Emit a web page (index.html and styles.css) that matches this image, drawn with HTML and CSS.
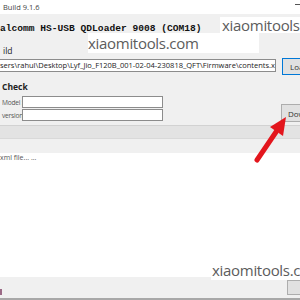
FILE: index.html
```html
<html>
	<head>
		<link rel="stylesheet" href="styles.css">
	</head>
	<body>
		<div class="window">
			<div class="titlebar">
				<span class="title">Build 9.1.6</span>
				<span class="min"></span>
			</div>
			<div class="port">alcomm HS-USB QDLoader 9008 (COM18)</div>
			<div class="caption">ild</div>
			<div class="row">
				<div class="textbox path">sers\rahul\Desktop\Lyf_Jio_F120B_001-02-04-230818_QFT\Firmware\contents.xml</div>
				<button class="btn focus">Load XML</button>
			</div>
			<div class="caption bold">Check</div>
			<div class="check">
				<div class="fields">
					<div class="field"><span class="label">Model :</span><div class="textbox"></div></div>
					<div class="field"><span class="label">version</span><div class="textbox"></div></div>
				</div>
				<button class="btn down">Download</button>
			</div>
			<div class="tabs"></div>
			<div class="subtabs"></div>
			<div class="log">xml file... ...</div>
			<div class="status">
				<span class="icon"></span>
				<button class="btn small"></button>
			</div>
		</div>
		<div class="mark mark-top">xiaomitools.com</div>
		<div class="mark mark-mid">xiaomitools.com</div>
		<div class="mark mark-low">xiaomitools.com</div>
		<svg class="arrow" width="300" height="300" viewBox="0 0 300 300">
			<line x1="257" y1="160" x2="276" y2="132" stroke="#e3161d" stroke-width="5" stroke-linecap="round"/>
			<polygon points="286,117 283,136 270,127" fill="#e3161d"/>
		</svg>
	</body>
</html>
```

FILE: styles.css
```css
body {
	margin: 0;
	width: 300px;
	height: 300px;
	overflow: hidden;
	position: relative;
	font-family: "Open Sans", sans-serif;
	font-size: 8px;
	color: #333;
}
.window {
	display: flex;
	flex-direction: column;
	height: 300px;
	background-color: #f0f0f0;
	overflow: hidden;
}
.titlebar {
	flex: none;
	display: flex;
	justify-content: space-between;
	align-items: center;
	height: 14px;
	background-color: #fff;
	padding-left: 3px;
}
.title {
	font-size: 7.5px;
	color: #444;
}
.min {
	width: 5px;
	height: 1px;
	margin-bottom: 5px;
	background-color: #555;
}
.port {
	flex: none;
	padding: 8px 0 10px;
	line-height: 14px;
	font-family: "Liberation Mono", monospace;
	font-weight: bold;
	font-size: 9.6px;
	color: #111;
	white-space: nowrap;
}
.caption {
	flex: none;
	height: 10px;
	line-height: 10px;
	padding-left: 3px;
	font-size: 8.5px;
	color: #222;
}
.bold {
	font-weight: bold;
	padding-left: 2px;
	margin-top: 7px;
}
.row {
	flex: none;
	display: flex;
	gap: 6px;
	margin-top: 2px;
}
.textbox {
	box-sizing: border-box;
	background-color: #fff;
	border: 1px solid #8c8c8c;
	height: 12px;
	line-height: 10px;
	overflow: hidden;
	white-space: nowrap;
}
.path {
	flex: none;
	width: 276px;
	height: 13px;
	margin-top: 1px;
	border-left: none;
	font-size: 7.5px;
	color: #222;
}
.btn {
	flex: none;
	box-sizing: border-box;
	width: 70px;
	height: 17px;
	padding: 0 0 0 7px;
	text-align: left;
	font-family: inherit;
	font-size: 8px;
	color: #333;
	background-color: #e1e1e1;
	border: 1px solid #adadad;
}
.focus { border-color: #0078d7; }
.check {
	flex: none;
	display: flex;
}
.fields {
	flex: none;
	display: flex;
	flex-direction: column;
	gap: 1px;
	width: 163px;
	margin-top: 4px;
}
.field {
	display: flex;
	align-items: center;
}
.label {
	width: 22px;
	padding-left: 2px;
	box-sizing: border-box;
	font-size: 6.6px;
	letter-spacing: -0.2px;
	color: #555;
	white-space: nowrap;
}
.field .textbox { flex: 1; }
.down {
	height: 18px;
	padding-left: 6px;
	margin: 12px 0 0 118px;
}
.tabs {
	flex: none;
	height: 12px;
	margin-top: 3px;
	background-color: #e3e3e3;
	border-top: 1px solid #d2d2d2;
	border-bottom: 1px solid #d9d9d9;
}
.subtabs {
	flex: none;
	height: 14px;
}
.log {
	flex: 1;
	background-color: #fff;
	line-height: 10px;
	font-size: 7px;
	color: #555;
}
.status {
	flex: none;
	display: flex;
	justify-content: space-between;
	align-items: center;
	height: 21px;
	border-bottom: 2px solid #a8a8a8;
}
.icon {
	width: 2px;
	height: 6px;
	margin-top: 8px;
	background-color: #9b6a86;
}
.small {
	width: 20px;
	height: 15px;
	margin-right: -7px;
}
.mark {
	position: absolute;
	background-color: #fff;
	color: #5c5c5c;
	font-size: 15px;
	letter-spacing: -0.3px;
	line-height: 16px;
	white-space: nowrap;
	overflow: hidden;
}
.mark-top {
	left: 220px;
	top: 17px;
	width: 80px;
	height: 16px;
	padding-left: 2px;
}
.mark-mid {
	left: 88px;
	top: 33px;
	width: 171px;
	height: 20px;
	padding-top: 2px;
	box-sizing: border-box;
}
.mark-low {
	left: 211px;
	top: 262px;
	width: 89px;
	height: 18px;
	padding-left: 1px;
}
.arrow {
	position: absolute;
	left: 0;
	top: 0;
	pointer-events: none;
}
```
